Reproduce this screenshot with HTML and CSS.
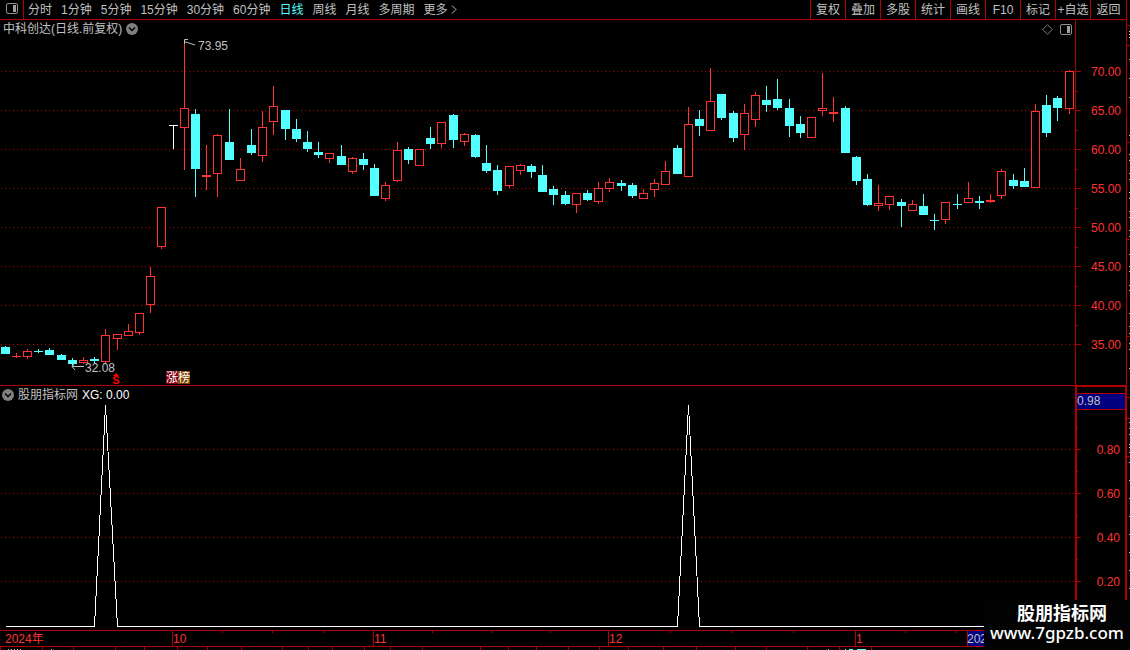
FILE: index.html
```html
<!DOCTYPE html>
<html lang="zh-CN">

    <head>
        <meta charset="UTF-8">
        <meta name="viewport" content="width=device-width, initial-scale=1.0">
        <title>中科创达 日线</title>
        <link rel="stylesheet" href="styles.css">
    </head>

    <body>
        <div class="terminal">
            <main class="content">
                <header class="toolbar">
                    <button class="panel-button" aria-label="侧栏">
                        <svg class="icon" width="12" height="11" viewBox="0 0 12 11">
                            <rect x="0.5" y="0.5" width="11" height="10" rx="1.5" fill="none" stroke="#909090" />
                            <rect x="7" y="2" width="3" height="7" fill="#a0a0a0" />
                        </svg>
                    </button>
                    <nav class="periods">
                        <button>分时</button>
                        <button>1分钟</button>
                        <button>5分钟</button>
                        <button>15分钟</button>
                        <button>30分钟</button>
                        <button>60分钟</button>
                        <button class="active">日线</button>
                        <button>周线</button>
                        <button>月线</button>
                        <button>多周期</button>
                        <button class="more">更多
                            <svg width="6" height="9" viewBox="0 0 6 9">
                                <path d="M1 0.5 L5 4.5 L1 8.5" fill="none" stroke="#c0c0c0" />
                            </svg>
                        </button>
                    </nav>
                    <div class="tools">
                        <button>复权</button>
                        <button>叠加</button>
                        <button>多股</button>
                        <button>统计</button>
                        <button>画线</button>
                        <button>F10</button>
                        <button>标记</button>
                        <button>+自选</button>
                        <button>返回</button>
                    </div>
                </header>

                <section class="pane price-pane">
                    <div class="plot">
                        <svg id="price_plot" class="chart"></svg>
                        <div class="pane-title">
                            <span>中科创达(日线.前复权)</span>
                            <button class="toggle" aria-label="展开">
                                <svg width="12" height="12" viewBox="0 0 12 12">
                                    <circle cx="6" cy="6" r="6" fill="#808080" />
                                    <path d="M3 4.5 L6 7.5 L9 4.5" fill="none" stroke="#000" stroke-width="1.5" />
                                </svg>
                            </button>
                        </div>
                        <div class="pane-icons">
                            <svg width="11" height="11" viewBox="0 0 11 11">
                                <path d="M5.5 0.7 L10.3 5.5 L5.5 10.3 L0.7 5.5 Z" fill="none" stroke="#808080" />
                            </svg>
                            <svg width="12" height="11" viewBox="0 0 12 11">
                                <rect x="0.5" y="0.5" width="11" height="10" rx="1.5" fill="none" stroke="#909090" />
                                <rect x="7" y="2" width="3" height="7" fill="#a0a0a0" />
                            </svg>
                        </div>
                    </div>
                    <div class="axis">
                        <svg id="price_axis" class="chart"></svg>
                    </div>
                </section>

                <section class="pane signal-pane">
                    <div class="plot">
                        <svg id="signal_plot" class="chart"></svg>
                        <div class="pane-title">
                            <button class="toggle" aria-label="展开">
                                <svg width="12" height="12" viewBox="0 0 12 12">
                                    <circle cx="6" cy="6" r="6" fill="#808080" />
                                    <path d="M3 4.5 L6 7.5 L9 4.5" fill="none" stroke="#000" stroke-width="1.5" />
                                </svg>
                            </button>
                            <span>股朋指标网</span>
                            <span class="value">XG: 0.00</span>
                        </div>
                    </div>
                    <div class="axis">
                        <svg id="signal_axis" class="chart"></svg>
                        <div class="current">0.98</div>
                    </div>
                </section>

                <div class="timeline">
                    <svg id="timeline" class="chart"></svg>
                </div>
                <div class="bottom-strip">
                    <svg id="bottom_strip" class="chart"></svg>
                </div>
            </main>

            <aside class="side">
                <svg id="side_strip" class="chart"></svg>
            </aside>

            <div class="watermark">
                <div class="site-name">股朋指标网</div>
                <div class="site-url">www.7gpzb.com</div>
            </div>
        </div>

        <script src="chart.js"></script>
    </body>

</html>
```

FILE: styles.css
```css
body {
    margin: 0;
    background-color: #000;
    color: #c0c0c0;
    font-family: "Liberation Sans", "Noto Sans CJK SC", sans-serif;
    font-size: 12px;
    line-height: 16px;
}

button {
    margin: 0;
    padding: 0;
    border: none;
    background: none;
    color: inherit;
    font: inherit;
    white-space: nowrap;
    cursor: pointer;
}

svg {
    display: block;
}

.terminal {
    position: relative;
    display: flex;
    height: 100vh;
    overflow: hidden;
}

.content {
    display: flex;
    flex: 1;
    flex-direction: column;
    min-width: 0;
}

.toolbar {
    display: flex;
    height: 19px;
    border-bottom: 1px solid #b00000;
}

.panel-button {
    display: flex;
    justify-content: center;
    width: 24px;
    padding-top: 3px;
    border-right: 1px solid #b00000;
}

.periods {
    display: flex;
    flex: 1;
    gap: 9px;
    padding-left: 4px;
}

.periods .active {
    color: #54ffff;
}

.more {
    display: flex;
    align-items: center;
    gap: 3px;
}

.tools {
    display: flex;
}

.tools button {
    width: 35px;
    border-left: 1px solid #b00000;
}

.tools button:last-child {
    width: 36px;
}

.pane {
    display: flex;
    flex: none;
}

.price-pane {
    height: 365px;
}

.signal-pane {
    height: 245px;
}

.plot {
    position: relative;
    flex: 1;
    min-width: 0;
}

.chart {
    width: 100%;
    height: 100%;
    overflow: hidden;
}

.chart text {
    fill: #ff3232;
}

.chart .note {
    fill: #c0c0c0;
}

.chart .mark {
    fill: #fff;
}

.chart .signal {
    fill: #ff0000;
    font-size: 11px;
    font-weight: bold;
}

.pane-title {
    position: absolute;
    top: 1px;
    left: 2px;
    display: flex;
    align-items: center;
    gap: 4px;
}

.price-pane .pane-title {
    left: 3px;
}

.value {
    color: #fff;
}

.pane-icons {
    position: absolute;
    top: 4px;
    right: 3px;
    display: flex;
    gap: 7px;
}

.axis {
    position: relative;
    box-sizing: border-box;
    width: 51px;
    border-left: 1px solid #b00000;
}

.signal-pane .plot {
    border-top: 1px solid #b00000;
}

.signal-pane .axis {
    border-top: 2px solid #b00000;
    border-right: 1px solid #b00000;
    border-left-width: 2px;
}

.current {
    position: absolute;
    top: 6px;
    right: 0;
    left: 0;
    height: 15px;
    border-top: 1px solid #b00000;
    border-bottom: 1px solid #b00000;
    background-color: #000080;
    line-height: 15px;
}

.timeline {
    height: 15px;
    border-top: 1px solid #b00000;
    border-bottom: 1px solid #b00000;
}

.bottom-strip {
    flex: 1;
    min-height: 0;
}

.side {
    width: 3px;
    border-left: 1px solid #b00000;
}

.watermark {
    position: absolute;
    right: 0;
    bottom: 0;
    box-sizing: border-box;
    width: 146px;
    height: 50px;
    padding-top: 4px;
    background-color: #030303;
    color: #fff;
    text-align: center;
}

.site-name {
    padding-left: 10px;
    font-size: 18px;
    font-weight: bold;
    line-height: 20px;
}

.site-url {
    font-family: "Noto Sans", sans-serif;
    font-size: 17px;
    font-weight: 500;
    line-height: 18px;
}
```

FILE: chart.js
```js
var RED = "#ff3232";
var CYAN = "#54ffff";
var LINE = "#b00000";
var GRID = "#b00000";

// [direction, high, body top, body bottom, low], u = up, d = down, f = flat up, t = limit
var candles = [
    ["d", 346, 347, 354, 354], ["f", 353, 356, 357, 358], ["u", 349, 351, 357, 359], ["d", 349, 351, 352, 353],
    ["d", 348, 350, 355, 355], ["d", 354, 355, 360, 360], ["d", 358, 360, 364, 366], ["u", 357, 360, 363, 364],
    ["d", 357, 359, 361, 363], ["u", 329, 335, 362, 363], ["u", 334, 334, 339, 350], ["u", 324, 331, 336, 336],
    ["u", 313, 313, 333, 335], ["u", 267, 276, 305, 313], ["u", 207, 207, 247, 249], ["t", 125, 125, 126, 149],
    ["u", 43, 108, 128, 170], ["d", 109, 114, 169, 197], ["f", 145, 175, 177, 190], ["u", 134, 135, 174, 197],
    ["d", 109, 142, 160, 160], ["u", 158, 169, 181, 181], ["d", 129, 145, 153, 155], ["u", 111, 127, 156, 162],
    ["u", 86, 106, 122, 135], ["d", 110, 110, 129, 140], ["d", 119, 129, 139, 142], ["d", 131, 142, 149, 152],
    ["d", 142, 152, 155, 158], ["u", 153, 153, 159, 163], ["d", 145, 156, 165, 165], ["u", 157, 158, 172, 174],
    ["d", 153, 159, 165, 170], ["d", 164, 168, 196, 196], ["u", 182, 185, 199, 201], ["u", 142, 150, 181, 182],
    ["d", 147, 149, 160, 164], ["u", 149, 149, 166, 166], ["d", 127, 138, 144, 149], ["u", 122, 122, 144, 148],
    ["d", 114, 115, 140, 148], ["u", 133, 134, 142, 146], ["d", 134, 135, 157, 158], ["d", 145, 163, 171, 173],
    ["d", 165, 170, 191, 195], ["u", 166, 166, 186, 188], ["u", 164, 165, 171, 175], ["d", 164, 166, 172, 178],
    ["d", 165, 175, 192, 192], ["d", 186, 189, 195, 205], ["d", 191, 195, 204, 205], ["u", 193, 193, 205, 213],
    ["d", 190, 193, 200, 201], ["u", 182, 188, 202, 204], ["u", 178, 182, 189, 192], ["d", 180, 183, 186, 191],
    ["d", 183, 185, 196, 198], ["u", 189, 193, 199, 199], ["u", 179, 183, 190, 197], ["u", 161, 171, 185, 185],
    ["d", 145, 148, 174, 174], ["u", 107, 124, 177, 177], ["d", 110, 119, 126, 136], ["u", 68, 101, 131, 131],
    ["d", 94, 94, 118, 120], ["d", 111, 113, 138, 142], ["u", 104, 113, 135, 150], ["u", 92, 95, 120, 127],
    ["d", 86, 100, 105, 112], ["d", 79, 99, 108, 110], ["d", 99, 108, 126, 137], ["d", 116, 124, 133, 138],
    ["u", 117, 117, 138, 138], ["u", 73, 108, 111, 116], ["f", 97, 112, 114, 122], ["d", 106, 108, 153, 153],
    ["d", 156, 157, 181, 185], ["d", 174, 179, 205, 206], ["u", 185, 203, 206, 211], ["u", 196, 196, 205, 210],
    ["d", 199, 202, 206, 227], ["u", 200, 204, 211, 211], ["d", 194, 206, 215, 215], ["d", 214, 220, 221, 230],
    ["u", 202, 202, 220, 224], ["d", 194, 204, 205, 209], ["u", 182, 198, 203, 203], ["d", 196, 201, 203, 209],
    ["f", 194, 200, 202, 203], ["u", 169, 171, 196, 199], ["d", 174, 180, 186, 189], ["d", 168, 181, 187, 187],
    ["u", 104, 111, 188, 188], ["d", 95, 105, 133, 137], ["d", 96, 98, 108, 121], ["u", 70, 71, 109, 114]
];

var PRICE_TOP = 20;
var SIGNAL_TOP = 386;

function byId(id) {
    return document.getElementById(id);
}

function rect(x, y, w, h, color) {
    return '<rect x="' + x + '" y="' + y + '" width="' + w + '" height="' + h + '" fill="' + color + '"/>';
}

function text(x, y, value, cls, anchor) {
    return '<text x="' + x + '" y="' + y + '" class="' + (cls || "") + '" text-anchor="' + (anchor || "start") + '">' + value + '</text>';
}

function gridLine(y, width) {
    return '<path d="M1 ' + (y + 0.5) + ' H' + width + '" stroke="' + GRID + '" stroke-dasharray="1 3" shape-rendering="crispEdges"/>';
}

function barX(i, width) {
    return Math.floor(5 + i * (width - 11) / (candles.length - 1) + 0.1);
}

function drawPrice() {
    var width = byId("price_plot").clientWidth;
    var out = "";
    for (var g = 0; g < 8; g++) {
        out += gridLine(71 + g * 39 - PRICE_TOP, width);
    }
    candles.forEach(function (c, i) {
        var x = barX(i, width);
        var high = c[1] - PRICE_TOP, top = c[2] - PRICE_TOP, bottom = c[3] - PRICE_TOP, low = c[4] - PRICE_TOP;
        var color = c[0] === "d" ? CYAN : c[0] === "t" ? "#fff" : RED;
        out += rect(x, high, 1, top - high, color) + rect(x, bottom, 1, low - bottom, color);
        if (c[0] === "u") {
            out += '<rect x="' + (x - 3.5) + '" y="' + (top + 0.5) + '" width="8" height="' + (bottom - top - 1) + '" fill="#000" stroke="' + RED + '"/>';
        } else {
            out += rect(x - 4, top, 9, bottom - top, color);
        }
    });

    // highest and lowest price
    var hi = barX(16, width), lo = barX(6, width);
    out += '<path d="M' + hi + ' 21.5 L' + (hi + 11) + ' 25 M' + (hi + 4) + ' 19.5 H' + (hi + 0.5) + ' V24" fill="none" stroke="#c0c0c0"/>';
    out += text(hi + 14, 30, "73.95", "note");
    out += '<path d="M' + lo + ' 346.5 H' + (lo + 12) + ' M' + (lo + 3) + ' 343 L' + lo + ' 346.5 L' + (lo + 3) + ' 350" fill="none" stroke="#c0c0c0"/>';
    out += text(lo + 13, 352, "32.08", "note");

    var sig = barX(10, width) - 1;
    out += '<path d="M' + (sig - 3) + ' 356 L' + sig + ' 353 L' + (sig + 3) + ' 356 Z" fill="#f00"/>';
    out += text(sig, 364, "S", "signal", "middle");

    var tag = barX(15, width) - 7;
    out += rect(tag, 351, 12, 13, "#800010") + rect(tag + 12, 351, 12, 13, "#804000");
    out += text(tag, 362, "涨", "mark") + text(tag + 12, 362, "榜", "mark");
    byId("price_plot").innerHTML = out;
}

function drawSignal() {
    var width = byId("signal_plot").clientWidth;
    var out = "";
    for (var g = 0; g < 4; g++) {
        out += gridLine(449 + g * 44 - SIGNAL_TOP, width);
    }
    var points = candles.map(function (c, i) {
        return (barX(i, width) + 0.5) + "," + (i === 9 || i === 61 ? 19 : 240.5);
    });
    out += '<polyline points="' + points.join(" ") + '" fill="none" stroke="#fff" stroke-miterlimit="1" shape-rendering="crispEdges"/>';
    byId("signal_plot").innerHTML = out;
}

function drawAxes() {
    var out = "";
    for (var i = 0; i < 8; i++) {
        var y = 71 + i * 39 - PRICE_TOP;
        out += rect(0, y, 5, 1, LINE) + text(45, y + 5, (70 - i * 5).toFixed(2), "", "end");
        if (i < 7) {
            out += rect(0, y + 20, 2, 1, LINE);
        }
    }
    byId("price_axis").innerHTML = out;

    out = "";
    for (i = 0; i < 4; i++) {
        y = 449 + i * 44 - SIGNAL_TOP - 1;
        out += rect(0, y - 22, 1, 1, LINE) + rect(0, y, 4, 1, LINE);
        out += text(43, y + 5, (0.8 - i * 0.2).toFixed(2), "", "end");
    }
    byId("signal_axis").innerHTML = out;
}

function drawTimeline() {
    var width = byId("price_plot").clientWidth;
    var months = [[15, "10"], [33, "11"], [54, "12"], [76, "1"], [94, ""]];
    var out = text(5, 12, "2024年");
    months.forEach(function (m, i) {
        var x = barX(m[0], width) - 1;
        if (m[1]) {
            out += rect(x, 0, 1, 15, LINE) + text(x + 1, 12, m[1]);
        }
        if (i < months.length - 1) {
            for (var q = 1; q < 4; q++) {
                out += rect(barX(m[0] + (months[i + 1][0] - m[0]) * q / 4, width) - 1, 0, 1, 2, LINE);
            }
        }
    });
    var cursor = barX(86, width) - 1;
    out += rect(cursor, 0, 70, 15, "#000080") + rect(cursor, 0, 1, 15, LINE) + text(cursor, 12, "20", "note") + text(cursor + 13, 12, "2", "note");
    byId("timeline").innerHTML = out;
}

function drawStrips() {
    var out = "";
    [0, 42, 73, 115, 144, 177, 207, 241, 282, 308, 332, 364, 390, 422, 480, 508, 536, 568, 599, 628, 663, 696, 735, 766, 807, 839, 871].forEach(function (x) {
        out += rect(x, 0, 1, 3, LINE);
    });
    [8, 11, 14, 17, 20, 51, 828].forEach(function (x) {
        out += rect(x, 2, 1, 1, "#c0c0c0");
    });
    out += rect(845, 2, 1, 1, CYAN) + rect(849, 2, 4, 1, CYAN) + rect(857, 2, 9, 1, CYAN);
    byId("bottom_strip").innerHTML = out;

    out = "";
    [25, 45, 142, 239, 336, 397, 418, 456].forEach(function (y) {
        out += rect(0, y, 3, 1, LINE);
    });
    [31, 34, 37, 59, 78, 97, 135, 154, 160, 173, 179, 192, 198, 211, 217, 230, 236, 254, 266, 271, 285, 290, 313, 326, 333,
        343, 349, 368, 422, 428, 434, 444, 447, 452, 462, 480, 498, 516, 534, 552, 570, 588].forEach(function (y) {
        out += rect(2, y, 1, 1, "#c0c0c0");
    });
    byId("side_strip").innerHTML = out;
}

function draw() {
    drawPrice();
    drawSignal();
    drawAxes();
    drawTimeline();
    drawStrips();
}

draw();
window.onresize = draw;
```
